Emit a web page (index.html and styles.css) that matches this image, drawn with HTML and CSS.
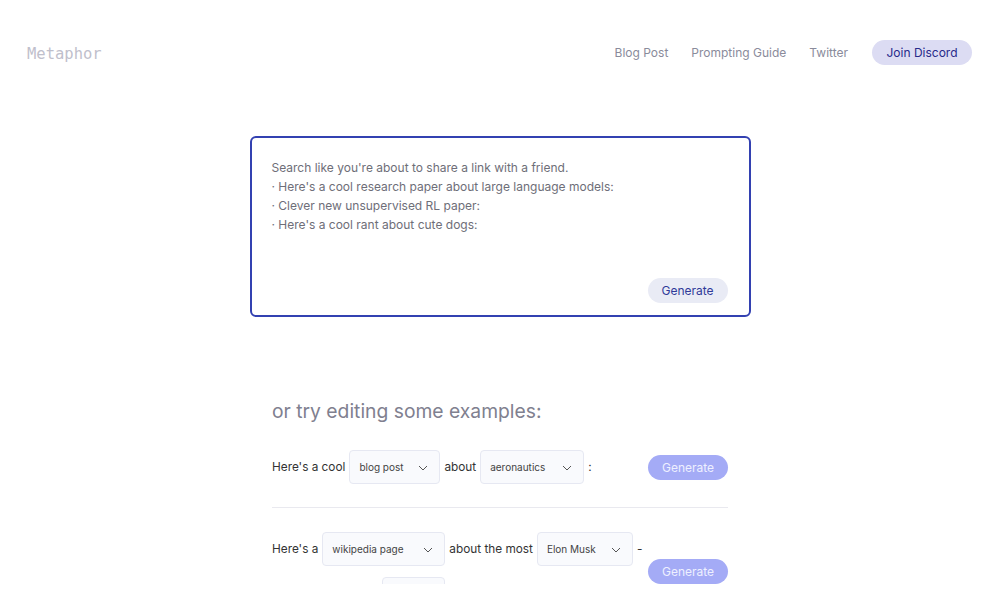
FILE: index.html
```html
<!DOCTYPE html>
<html lang="en">
<head>
    <meta charset="UTF-8">
    <meta name="viewport" content="width=device-width, initial-scale=1.0">
    <title>Metaphor</title>
    <link rel="stylesheet" href="styles.css">
</head>
<body>
    <header class="topbar">
        <div class="logo">Metaphor</div>
        <nav class="nav">
            <a href="#">Blog Post</a>
            <a href="#">Prompting Guide</a>
            <a href="#">Twitter</a>
            <a href="#" class="discord">Join Discord</a>
        </nav>
    </header>

    <main>
        <div class="search-box">
            <div class="prompt">
                <p>Search like you're about to share a link with a friend.</p>
                <p>&middot; Here's a cool research paper about large language models:</p>
                <p>&middot; Clever new unsupervised RL paper:</p>
                <p>&middot; Here's a cool rant about cute dogs:</p>
            </div>
            <div class="box-actions">
                <button class="btn-soft">Generate</button>
            </div>
        </div>

        <section class="examples">
            <h2>or try editing some examples:</h2>

            <div class="example">
                <div class="sentence">
                    <span>Here's a cool</span>
                    <div class="pick w-91"><span>blog post</span><svg width="10" height="6" viewBox="0 0 10 6"><path d="M1 1l4 4 4-4" fill="none" stroke="#555" stroke-width="1"/></svg></div>
                    <span>about</span>
                    <div class="pick w-104"><span>aeronautics</span><svg width="10" height="6" viewBox="0 0 10 6"><path d="M1 1l4 4 4-4" fill="none" stroke="#555" stroke-width="1"/></svg></div>
                    <span>:</span>
                </div>
                <button class="btn-blue">Generate</button>
            </div>

            <div class="example">
                <div class="sentence">
                    <span>Here's a</span>
                    <div class="pick w-123"><span>wikipedia page</span><svg width="10" height="6" viewBox="0 0 10 6"><path d="M1 1l4 4 4-4" fill="none" stroke="#555" stroke-width="1"/></svg></div>
                    <span>about the most</span>
                    <div class="pick w-96"><span>Elon Musk</span><svg width="10" height="6" viewBox="0 0 10 6"><path d="M1 1l4 4 4-4" fill="none" stroke="#555" stroke-width="1"/></svg></div>
                    <span>-</span>
                    <div class="pick w-63 indent"></div>
                </div>
                <button class="btn-blue">Generate</button>
            </div>
        </section>
    </main>

    <!-- white fade at the bottom of the viewport -->
    <div class="bottom-fade"></div>
</body>
</html>
```

FILE: styles.css
```css
body {
    font-family: Inter, "Noto Sans", sans-serif;
    margin: 0;
    padding: 0;
    background: #fff;
    color: #333;
}
.topbar {
    display: flex;
    justify-content: space-between;
    align-items: center;
    padding: 40px 28px 0 27px;
    height: 25px;
}
.logo {
    font-family: "DejaVu Sans Mono", "Liberation Mono", monospace;
    font-size: 15.5px;
    color: #bfc0cc;
    margin-top: 2px;
}
.nav {
    display: flex;
    align-items: center;
    gap: 23px;
}
.nav a {
    color: #8a8b9b;
    text-decoration: none;
    font-size: 12px;
    white-space: nowrap;
}
.nav a.discord {
    box-sizing: border-box;
    background: #dcdcf3;
    color: #27298a;
    width: 100px;
    height: 25px;
    line-height: 25px;
    border-radius: 13px;
    margin-left: 1px;
    text-align: center;
}
main {
    padding-top: 71px;
}
.search-box {
    width: 456px;
    margin: 0 auto;
    border: 2px solid #3341b1;
    border-radius: 6px;
    padding: 20px 21px 12px 20px;
}
.prompt {
    min-height: 120px;
    font-size: 12px;
    line-height: 19px;
    color: #6e6e78;
}
.prompt p {
    margin: 0;
}
.box-actions {
    display: flex;
    justify-content: flex-end;
}
.btn-soft {
    font-family: inherit;
    border: none;
    background: #e9ebf5;
    color: #2f3a99;
    font-size: 12px;
    width: 80px;
    height: 25px;
    border-radius: 13px;
}
.examples {
    width: 456px;
    margin: 82px auto 0;
}
.examples h2 {
    margin: 0 0 27px;
    font-size: 19.3px;
    line-height: 24px;
    font-weight: 400;
    color: #80808f;
}
.example {
    display: flex;
    align-items: center;
    justify-content: space-between;
    padding-bottom: 23px;
    border-bottom: 1px solid #e9e9ef;
    margin-bottom: 24px;
}
.sentence {
    display: flex;
    flex-wrap: wrap;
    align-items: center;
    column-gap: 4px;
    row-gap: 11px;
    width: 372px;
    font-size: 11.8px;
}
.pick {
    box-sizing: border-box;
    height: 34px;
    display: flex;
    align-items: center;
    justify-content: space-between;
    padding: 0 11px 0 9px;
    border: 1px solid #e6e8f2;
    background: #f9fafd;
    border-radius: 4px;
    font-size: 10px;
    color: #444;
}
.pick svg {
    margin-top: 2px;
}
.w-91 { width: 91px; }
.w-104 { width: 104px; }
.w-123 { width: 123px; }
.w-96 { width: 96px; }
.w-63 { width: 63px; }
.indent {
    margin-left: 110px;
}
.btn-blue {
    font-family: inherit;
    border: none;
    background: #a4abf6;
    color: #eef0ff;
    font-size: 12px;
    width: 80px;
    height: 25px;
    border-radius: 13px;
}
.bottom-fade {
    position: fixed;
    left: 0;
    right: 0;
    bottom: 0;
    height: 16px;
    background: #fff;
}
```
